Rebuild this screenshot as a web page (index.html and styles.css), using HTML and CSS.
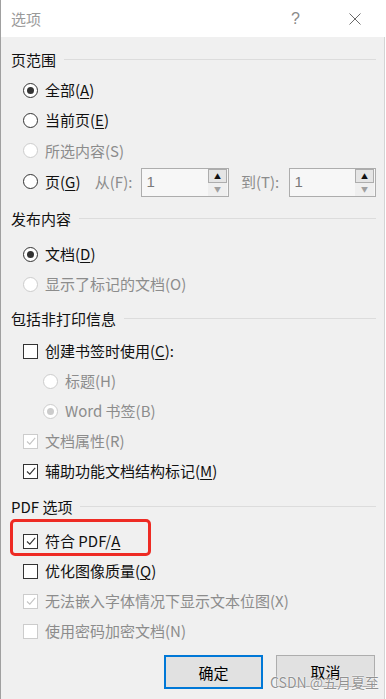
FILE: index.html
```html
<!DOCTYPE html>
<html lang="zh-CN">
<head>
    <meta charset="UTF-8">
    <meta name="viewport" content="width=device-width, initial-scale=1.0">
    <title>选项</title>
    <link rel="stylesheet" href="styles.css">
</head>
<body>

    <div class="dialog">
        <div class="titlebar">
            <span class="title">选项</span>
            <span class="help">?</span>
            <svg class="close" width="12" height="12" viewBox="0 0 12 12">
                <path d="M0.5 0.5 L11.5 11.5 M11.5 0.5 L0.5 11.5" stroke="#6a6a6a" stroke-width="1" fill="none"/>
            </svg>
        </div>

        <div class="content">
            <div class="group first">
                <div class="group-title">页范围</div>
                <div class="rows">
                    <div class="row"><span class="radio checked"></span>全部(<u>A</u>)</div>
                    <div class="row"><span class="radio"></span>当前页(<u>E</u>)</div>
                    <div class="row tall disabled"><span class="radio"></span>所选内容(S)</div>
                    <div class="row tall">
                        <span class="page-opt"><span class="radio"></span>页(<u>G</u>)</span>
                        <span class="spin-label from">从(F):</span>
                        <span class="spin">
                            <span class="spin-value">1</span>
                            <span class="spin-btns">
                                <span class="spin-up">▲</span>
                                <span class="spin-down">▼</span>
                            </span>
                        </span>
                        <span class="spin-label to">到(T):</span>
                        <span class="spin">
                            <span class="spin-value">1</span>
                            <span class="spin-btns">
                                <span class="spin-up">▲</span>
                                <span class="spin-down">▼</span>
                            </span>
                        </span>
                    </div>
                </div>
            </div>

            <div class="group second">
                <div class="group-title">发布内容</div>
                <div class="rows">
                    <div class="row"><span class="radio checked"></span>文档(<u>D</u>)</div>
                    <div class="row disabled"><span class="radio"></span>显示了标记的文档(O)</div>
                </div>
            </div>

            <div class="group third">
                <div class="group-title">包括非打印信息</div>
                <div class="rows">
                    <div class="row"><span class="check"></span>创建书签时使用(<u>C</u>):</div>
                    <div class="row nested disabled"><span class="radio"></span>标题(H)</div>
                    <div class="row nested disabled"><span class="radio dot"></span>Word 书签(B)</div>
                    <div class="row disabled">
                        <span class="check on"><svg width="12" height="12" viewBox="0 0 12 12"><path d="M2 6.5 L4.8 9.2 L10.2 2.8" stroke="#c4c4c4" stroke-width="1.1" fill="none"/></svg></span>文档属性(R)
                    </div>
                    <div class="row">
                        <span class="check on"><svg width="12" height="12" viewBox="0 0 12 12"><path d="M2 6.5 L4.8 9.2 L10.2 2.8" stroke="#333" stroke-width="1.1" fill="none"/></svg></span>辅助功能文档结构标记(<u>M</u>)
                    </div>
                </div>
            </div>

            <div class="group fourth">
                <div class="group-title">PDF 选项</div>
                <div class="rows">
                    <div class="row">
                        <span class="check on"><svg width="12" height="12" viewBox="0 0 12 12"><path d="M2 6.5 L4.8 9.2 L10.2 2.8" stroke="#333" stroke-width="1.1" fill="none"/></svg></span>符合 PDF/<u>A</u>
                    </div>
                    <div class="row"><span class="check"></span>优化图像质量(<u>Q</u>)</div>
                    <div class="row disabled">
                        <span class="check on"><svg width="12" height="12" viewBox="0 0 12 12"><path d="M2 6.5 L4.8 9.2 L10.2 2.8" stroke="#c4c4c4" stroke-width="1.1" fill="none"/></svg></span>无法嵌入字体情况下显示文本位图(X)
                    </div>
                    <div class="row disabled"><span class="check"></span>使用密码加密文档(N)</div>
                </div>
            </div>

            <div class="buttons">
                <button class="btn default">确定</button>
                <button class="btn">取消</button>
            </div>

            <div class="highlight"></div>
            <div class="watermark">CSDN @五月夏至</div>
        </div>
    </div>

</body>
</html>
```

FILE: styles.css
```css
html, body {
    margin: 0;
    background: #ffffff;
}
body {
    font-family: "Noto Sans CJK SC", "Noto Sans", sans-serif;
    font-size: 15px;
    color: #111;
}
.dialog {
    width: 384px;
    height: 699px;
    border-left: 1px solid #a0a0a0;
    display: flex;
    flex-direction: column;
}
.titlebar {
    height: 37px;
    background: #fff;
    display: flex;
    align-items: center;
    padding: 0 24px 0 10px;
    flex-shrink: 0;
}
.title {
    color: #9a9a9a;
    line-height: 20px;
    flex: 1;
}
.help {
    color: #8a8a8a;
    font-family: "Liberation Sans", sans-serif;
    font-size: 16px;
    margin-right: 49px;
}
.content {
    position: relative;
    flex: 1;
    background: #f0f0f0;
    border-right: 1px solid #d4d4d4;
    padding: 0 8px 0 10px;
}
.group-title {
    height: 20px;
    line-height: 20px;
    display: flex;
    align-items: center;
    gap: 8px;
    white-space: nowrap;
}
.group-title::after {
    content: "";
    flex: 1;
    height: 1px;
    background: #dcdcdc;
    margin-top: -2px;
}
.first { margin-top: 13px; }
.first .rows { padding-top: 5px; }
.second { margin-top: 12px; }
.second .rows { padding-top: 10px; }
.third { margin-top: 10px; }
.third .rows { padding-top: 7px; }
.fourth { margin-top: 11px; }
.fourth .rows { padding-top: 9px; }

.row {
    height: 30px;
    display: flex;
    align-items: center;
    padding-left: 12px;
    line-height: 20px;
    white-space: nowrap;
}
.row.tall {
    height: 31px;
}
.row.nested {
    padding-left: 32px;
}
.row.disabled {
    color: #8c8c8c;
}
.row u {
    text-decoration-thickness: 1px;
    text-underline-offset: 2px;
}

.radio {
    width: 13px;
    height: 13px;
    border: 1px solid #333;
    border-radius: 50%;
    background: #fff;
    margin-right: 7px;
    position: relative;
    flex-shrink: 0;
}
.radio.checked::after,
.radio.dot::after {
    content: "";
    position: absolute;
    left: 3px;
    top: 3px;
    width: 7px;
    height: 7px;
    border-radius: 50%;
    background: #333;
}
.disabled .radio {
    border-color: #cccccc;
}
.radio.dot::after {
    background: #cccccc;
}

.check {
    width: 13px;
    height: 13px;
    border: 1px solid #333;
    background: #fff;
    margin-right: 7px;
    display: flex;
    align-items: center;
    justify-content: center;
    flex-shrink: 0;
}
.disabled .check {
    border-color: #cccccc;
}

.page-opt {
    display: flex;
    align-items: center;
    width: 74px;
}
.spin-label {
    color: #8c8c8c;
    width: 48px;
}
.spin-label.to {
    width: 50px;
    margin-left: 12px;
}
.spin {
    width: 83px;
    height: 27px;
    border: 1px solid #adadad;
    background: #f7f7f7;
    display: flex;
    align-items: center;
    justify-content: space-between;
    padding: 0 1px 0 4px;
    box-sizing: content-box;
    margin-top: 1px;
}
.spin + .spin-label + .spin {
    width: 82px;
}
.spin-value {
    color: #7a7a7a;
    font-family: "Liberation Sans", sans-serif;
    font-size: 15px;
}
.spin-btns {
    display: flex;
    flex-direction: column;
    width: 19px;
}
.spin-up,
.spin-down {
    height: 12px;
    font-size: 7px;
    display: flex;
    align-items: center;
    justify-content: center;
    background: #ececec;
}
.spin-up {
    border: 1px solid #adadad;
    background: #e5e5e5;
    color: #111;
}
.spin-down {
    height: 13px;
    color: #a0a0a0;
    background: #efefef;
}

.buttons {
    display: flex;
    justify-content: flex-end;
    align-items: flex-start;
    gap: 13px;
    margin-top: 9px;
    padding-right: 1px;
}
.btn {
    width: 99px;
    height: 32px;
    background: #e1e1e1;
    border: 1px solid #adadad;
    font-family: "Noto Sans CJK SC", sans-serif;
    font-size: 15px;
    color: #000;
    padding: 0;
}
.btn.default {
    height: 34px;
    border: 2px solid #0078d7;
}

.highlight {
    position: absolute;
    left: 9px;
    top: 482px;
    width: 135px;
    height: 31px;
    border: 3px solid #ee2b24;
    border-radius: 5px;
}
.watermark {
    position: absolute;
    left: 269px;
    top: 635px;
    font-size: 14px;
    color: rgba(110, 110, 110, 0.75);
    text-shadow: 0 0 2px #fff, 0 0 1px #fff;
    white-space: nowrap;
}
```
